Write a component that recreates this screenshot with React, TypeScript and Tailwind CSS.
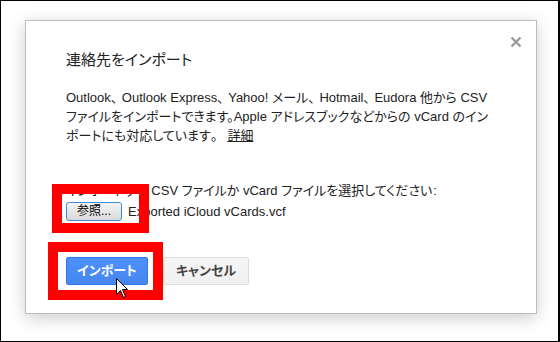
import React from 'react';

const font = "font-['Liberation_Sans','Noto_Sans_CJK_JP',sans-serif] [font-feature-settings:'palt']";

// full-width comma, kept wider than palt would make it
const C = () => <span className="inline-block w-[11px]">、</span>;

const Cursor = () => (
  <svg width="13" height="20" viewBox="0 0 13 20" className="absolute left-[115px] top-[277px]">
    <path d="M0.5 0.5 L0.5 16.5 L4.5 12.5 L7.5 19.5 L9.5 18.5 L6.5 11.5 L11.5 11.5 Z" fill="#fff" stroke="#000" strokeWidth="1" />
  </svg>
);

export default function App() {
  return (
    <div className={`relative w-[560px] h-[342px] overflow-hidden bg-white border border-black border-r-2 ${font}`}>
      <div className="relative ml-[24px] mt-[19px] w-[512px] h-[294px] border border-[#bdbdbd] bg-white pl-[40px] pt-[29px] shadow-[0_4px_16px_rgba(0,0,0,0.2)]">
        <button className="absolute right-[14px] top-[15px]">
          <svg width="12" height="12" viewBox="0 0 12 12">
            <path d="M1.5 1.5 L10.5 10.5 M10.5 1.5 L1.5 10.5" stroke="#9a9a9a" strokeWidth="2.4" />
          </svg>
        </button>

        <h2 className="text-[15px] leading-[20px] text-[#222]">連絡先をインポート</h2>

        <p className="mt-[18px] text-[13px] leading-[19px] text-[#222] whitespace-nowrap">
          Outlook<C />Outlook Express<C />Yahoo! メール<C />Hotmail<C />Eudora 他から CSV
          <br />
          ファイルをインポートできます。Apple アドレスブックなどからの vCard のイン
          <br />
          ポートにも対応しています<span className="inline-block w-[13px]">。</span> <a className="underline text-[#222]">詳細</a>
        </p>

        <div className="mt-[36px] text-[13px] leading-[19px] text-[#222] whitespace-nowrap">
          インポートする CSV ファイルか vCard ファイルを選択してください<span className="ml-[1px]">:</span>
        </div>
        <div className="mt-[1px] flex items-center h-[21px]">
          <button className="h-[19px] w-[56px] rounded-[3px] border border-[#3c8fd6] bg-gradient-to-b from-[#f4f4f4] to-[#d9d9d9] text-[12px] leading-[17px] text-black">
            参照...
          </button>
          <span className="ml-[6px] text-[13px] text-[#222]">Exported iCloud vCards.vcf</span>
        </div>

        <div className="mt-[35px] flex gap-[15px]">
          <button className="h-[28px] w-[82px] rounded-[2px] border border-[#3079ed] bg-gradient-to-b from-[#4d90fe] to-[#4787ed] text-[13px] font-bold text-white">
            インポート
          </button>
          <button className="h-[28px] w-[86px] rounded-[2px] border border-[#dcdcdc] bg-gradient-to-b from-[#f5f5f5] to-[#f1f1f1] text-[13px] font-bold text-[#444]">
            キャンセル
          </button>
        </div>
      </div>

      <div className="absolute left-[51px] top-[183px] w-[97px] h-[49px] border-[10px] border-[#ff0000]" />
      <div className="absolute left-[47px] top-[241px] w-[115px] h-[58px] border-[10px] border-[#ff0000]" />
      <Cursor />
    </div>
  );
}
